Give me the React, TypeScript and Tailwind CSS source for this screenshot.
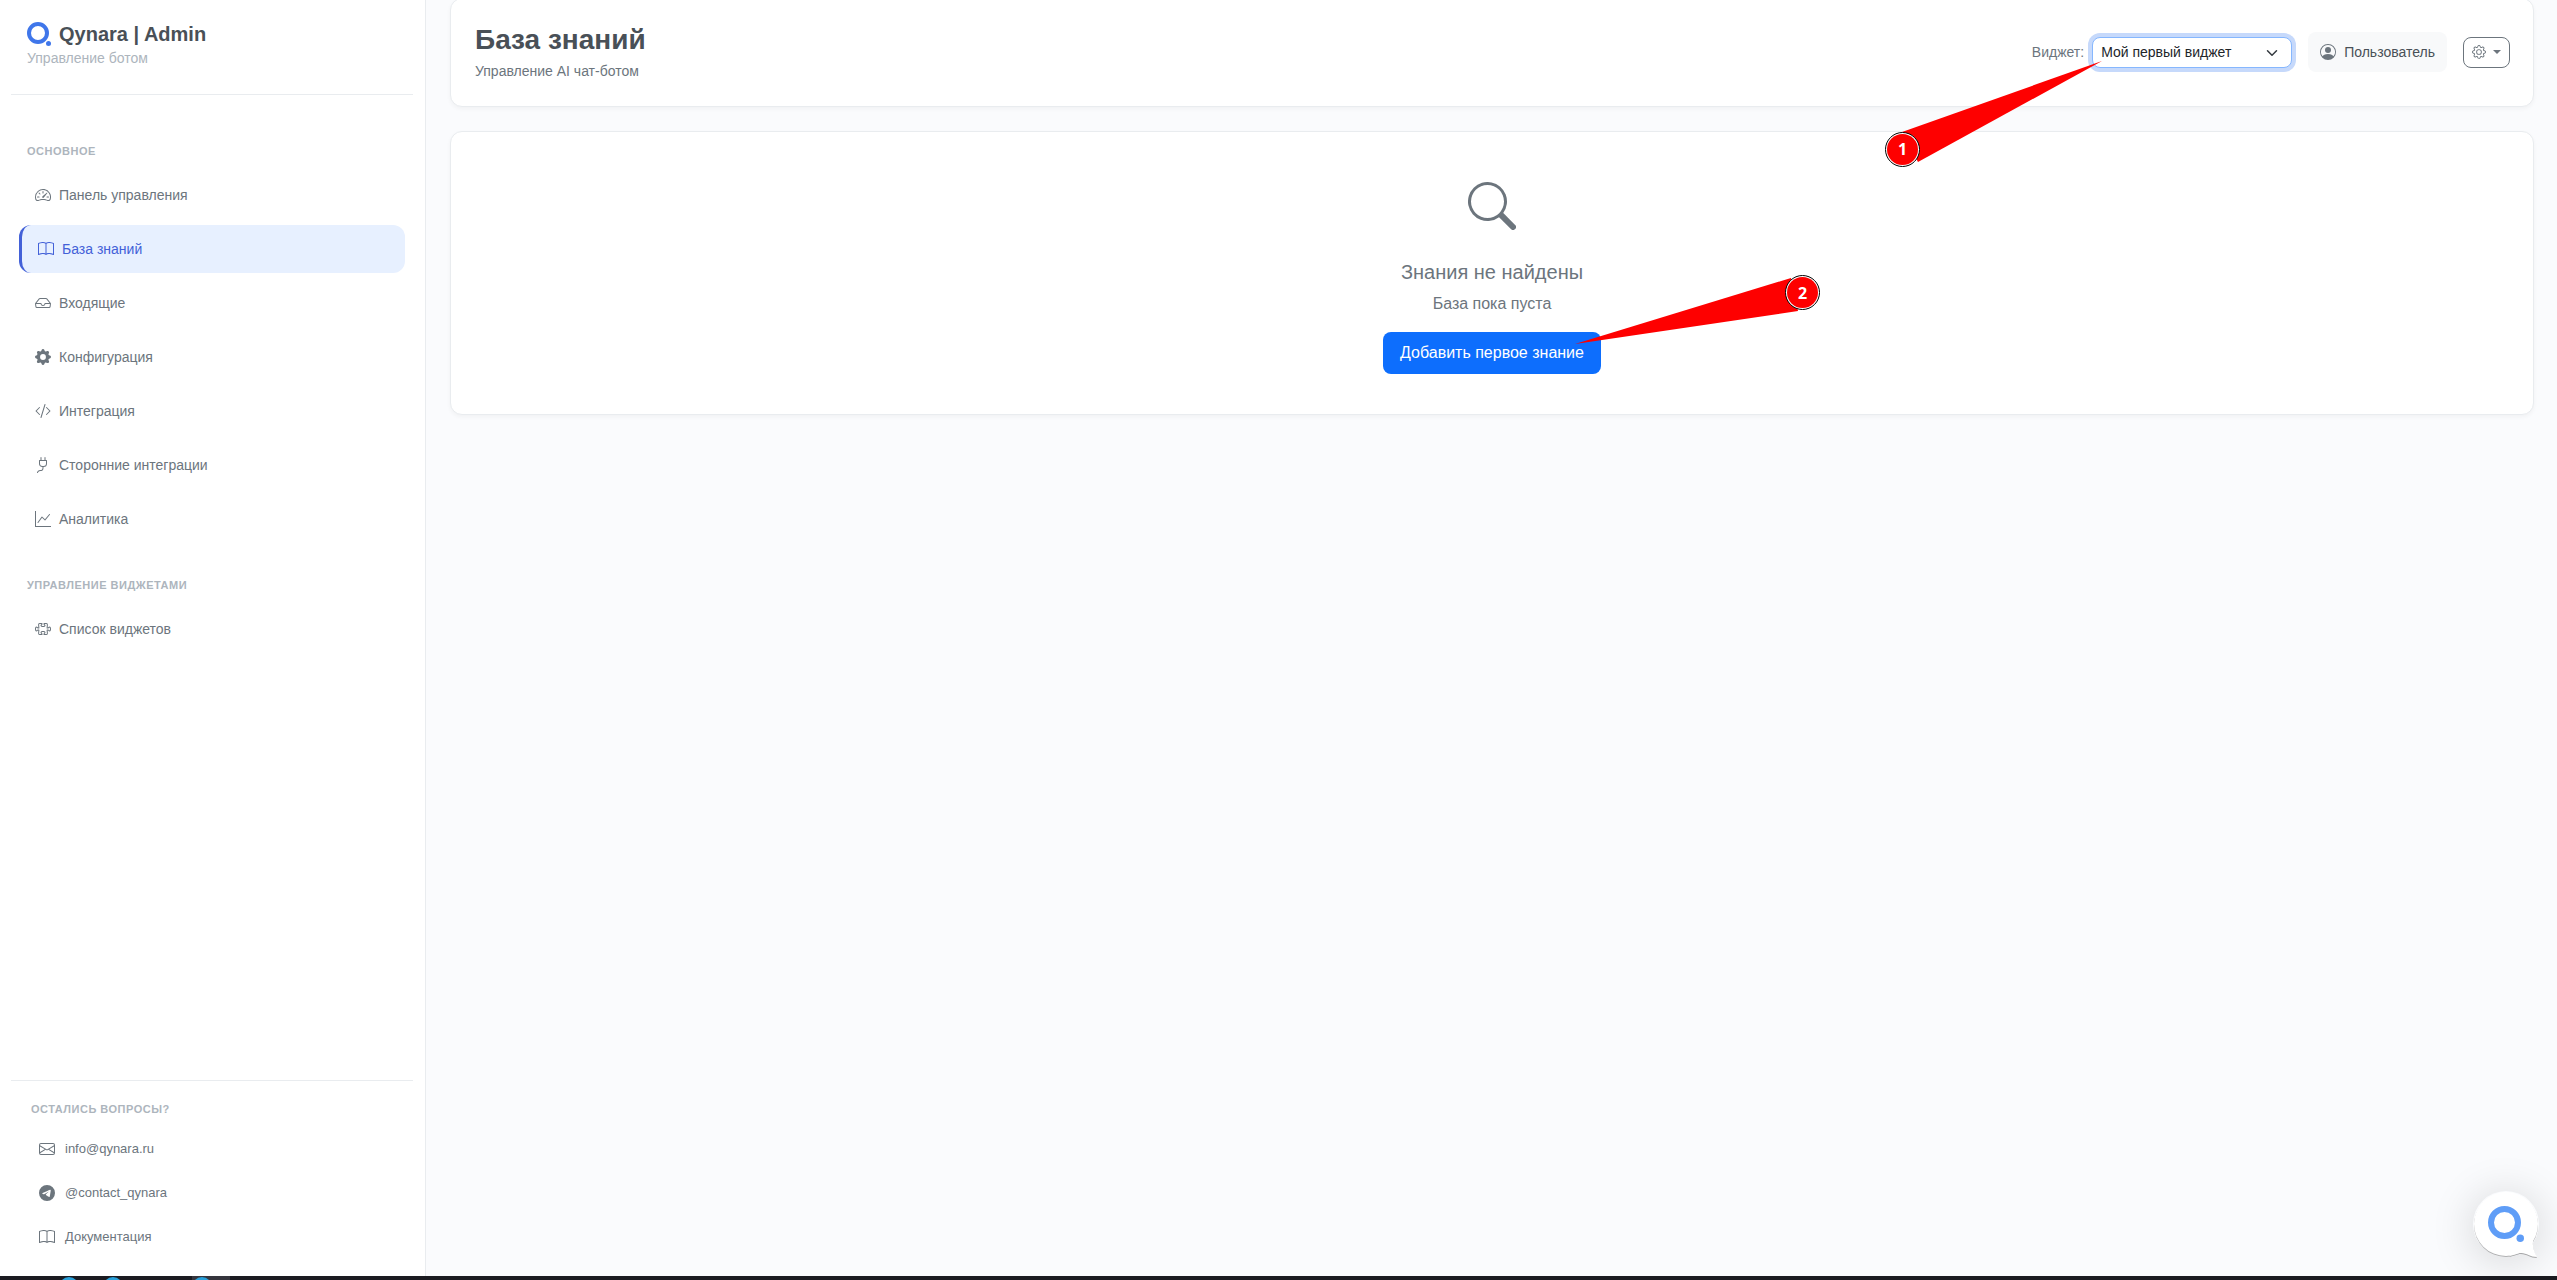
import { useState } from 'react';
import type { IconType } from 'react-icons';
import {
  BsBook,
  BsCodeSlash,
  BsEnvelope,
  BsGear,
  BsGearFill,
  BsGraphUp,
  BsInbox,
  BsPersonCircle,
  BsPlug,
  BsPuzzle,
  BsSearch,
  BsSpeedometer2,
  BsTelegram,
} from 'react-icons/bs';

type NavItem = { label: string; icon: IconType };

const mainNav: NavItem[] = [
  { label: 'Панель управления', icon: BsSpeedometer2 },
  { label: 'База знаний', icon: BsBook },
  { label: 'Входящие', icon: BsInbox },
  { label: 'Конфигурация', icon: BsGearFill },
  { label: 'Интеграция', icon: BsCodeSlash },
  { label: 'Сторонние интеграции', icon: BsPlug },
  { label: 'Аналитика', icon: BsGraphUp },
];

const widgetNav: NavItem[] = [{ label: 'Список виджетов', icon: BsPuzzle }];

const contacts: NavItem[] = [
  { label: 'info@qynara.ru', icon: BsEnvelope },
  { label: '@contact_qynara', icon: BsTelegram },
  { label: 'Документация', icon: BsBook },
];

const Logo = ({ className }: { className?: string }) => (
  <svg viewBox="0 0 24 24" className={className} fill="none" aria-hidden="true">
    <circle cx="11" cy="11" r="9" stroke="currentColor" strokeWidth="4" />
    <circle cx="21.5" cy="21.5" r="2.5" fill="currentColor" />
  </svg>
);

const NavSection = ({
  title,
  items,
  active,
  onSelect,
}: {
  title: string;
  items: NavItem[];
  active: string;
  onSelect: (label: string) => void;
}) => (
  <section>
    <h2 className="px-2 text-[11px] leading-4 font-bold tracking-[0.5px] text-[#adb5bd] uppercase">{title}</h2>
    <ul className="mt-3 space-y-1.5">
      {items.map(({ label, icon: Icon }) => (
        <li key={label}>
          <a
            href="#"
            onClick={() => onSelect(label)}
            className={
              label === active
                ? 'flex h-12 items-center gap-2 rounded-xl border-l-3 border-[#4361d8] bg-[#e7f0ff] px-4 text-sm text-[#4361d8]'
                : 'flex h-12 items-center gap-2 rounded-xl px-4 text-sm text-[#6c757d] hover:bg-gray-50'
            }
          >
            <Icon className="size-4" />
            {label}
          </a>
        </li>
      ))}
    </ul>
  </section>
);

const Sidebar = () => {
  const [active, setActive] = useState('База знаний');

  return (
    <aside className="flex w-[426px] shrink-0 flex-col border-r border-[#e9ecef] bg-white px-3 pl-[11px]">
      <div className="border-b border-[#e9ecef] px-4 pt-5 pb-[26px]">
        <div className="flex items-center gap-2">
          <Logo className="size-6 text-[#3f76ea]" />
          <span className="text-xl leading-7 font-bold text-[#495057]">Qynara | Admin</span>
        </div>
        <p className="text-sm leading-5 text-[#adb5bd]">Управление ботом</p>
      </div>

      <nav className="space-y-[34px] px-2 pt-12">
        <NavSection title="Основное" items={mainNav} active={active} onSelect={setActive} />
        <NavSection title="Управление виджетами" items={widgetNav} active={active} onSelect={setActive} />
      </nav>

      <div className="mt-auto border-t border-[#e9ecef] px-5 pt-5 pb-[17px]">
        <h2 className="text-[11px] leading-4 font-bold tracking-[0.5px] text-[#adb5bd] uppercase">
          Остались вопросы?
        </h2>
        <ul className="mt-2.5">
          {contacts.map(({ label, icon: Icon }) => (
            <li key={label}>
              <a href="#" className="flex h-11 items-center gap-2.5 px-2 text-[13px] text-[#6c757d]">
                <Icon className="size-4" />
                {label}
              </a>
            </li>
          ))}
        </ul>
      </div>
    </aside>
  );
};

const Marker = ({ children, className }: { children: string; className: string }) => (
  <span className={`absolute size-[35px] rounded-full border border-black bg-white p-px ${className}`}>
    <span className="flex size-full items-center justify-center rounded-full bg-[#fe0000] font-['Open_Sans',sans-serif] text-base font-bold text-white">
      {children}
    </span>
  </span>
);

const WidgetSelect = () => (
  <div className="relative">
    <select
      id="widget"
      className="h-[31px] w-[200px] appearance-none rounded-lg border border-[#86b7fe] bg-white px-2 text-sm text-[#212529] ring-4 ring-[#c6d9fb] outline-none"
    >
      <option>Мой первый виджет</option>
    </select>
    <svg viewBox="0 0 16 16" className="pointer-events-none absolute top-2.5 right-3.5 size-3" fill="none" aria-hidden="true">
      <path d="m2 5 6 6 6-6" stroke="#343a40" strokeWidth="2" strokeLinecap="round" strokeLinejoin="round" />
    </svg>
    <div className="pointer-events-none absolute top-6 -left-[207px] z-10 h-[120px] w-[217px]">
      <svg viewBox="0 0 217 120" className="size-full" aria-hidden="true">
        <path d="M217 0 17 71l16 30Z" fill="#fe0000" />
      </svg>
      <Marker className="top-[71px] left-0">1</Marker>
    </div>
  </div>
);

const Header = () => (
  <header className="-mt-0.5 flex items-start justify-between rounded-xl border border-[#e9ecef] bg-white pt-[25px] pr-[23px] pb-[25px] pl-6 shadow-[0_2px_4px_rgba(0,0,0,0.04)]">
    <div>
      <h1 className="text-[28px] leading-8 font-bold text-[#495057]">База знаний</h1>
      <p className="mt-[5px] text-sm leading-5 text-[#6c757d]">Управление AI чат-ботом</p>
    </div>
    <div className="flex items-center gap-4 pt-2">
      <div className="flex items-center gap-2">
        <label htmlFor="widget" className="text-sm text-[#6c757d]">
          Виджет:
        </label>
        <WidgetSelect />
      </div>
      <button className="flex h-10 items-center gap-2 rounded-lg bg-[#f8f9fa] px-3 text-sm text-[#495057]">
        <BsPersonCircle className="size-4 text-[#6c757d]" />
        Пользователь
      </button>
      <button
        aria-label="Настройки"
        className="flex h-[31px] items-center gap-[7px] rounded-lg border border-[#6c757d] px-2 text-[#6c757d]"
      >
        <BsGear className="size-3.5" />
        <span className="border-x-4 border-t-4 border-x-transparent border-t-[#6c757d]" />
      </button>
    </div>
  </header>
);

const EmptyState = () => (
  <section className="flex flex-col items-center rounded-xl border border-[#e9ecef] bg-white px-6 pt-[50px] pb-10 text-[#6c757d] shadow-[0_2px_4px_rgba(0,0,0,0.04)]">
    <BsSearch className="size-12" />
    <h2 className="mt-[30px] text-xl leading-6">Знания не найдены</h2>
    <p className="mt-2 text-base leading-6">База пока пуста</p>
    <div className="relative mt-4">
      <button className="h-[42px] rounded-lg bg-[#0d6efd] px-[17px] text-base text-white">
        Добавить первое знание
      </button>
      <div className="pointer-events-none absolute -top-[57px] left-[192px] h-[70px] w-[245px]">
        <svg viewBox="0 0 245 70" className="size-full" aria-hidden="true">
          <path d="M0 69 216 3l7 33Z" fill="#fe0000" />
        </svg>
        <Marker className="top-0 right-0">2</Marker>
      </div>
    </div>
  </section>
);

const ChatButton = () => (
  <button
    aria-label="Открыть чат"
    className="absolute right-[18px] bottom-[19px] size-[66px] rounded-full shadow-[0_4px_40px_4px_rgba(0,0,0,0.13)]"
  >
    <svg
      viewBox="0 0 66 66"
      className="absolute inset-0 size-full overflow-visible drop-shadow-[0_1px_0_rgba(0,0,0,0.3)]"
      fill="#fff"
      aria-hidden="true"
    >
      <circle cx="33" cy="33" r="32" />
      <path d="M64 40c-6 9-5 17 0 26-7 0-10-4-16-4-5 0-7 2-12 3Z" />
    </svg>
    <Logo className="absolute top-[15px] left-[15px] size-9 text-[#5f9df7]" />
  </button>
);

const Taskbar = () => (
  <footer className="flex h-1 shrink-0 gap-6 overflow-hidden bg-[#1b1b21] pl-[59px]">
    <span className="mt-px size-5 rounded-full bg-[#2aa1da]" />
    <span className="mt-px size-5 rounded-full bg-[#2aa1da]" />
    <span className="ml-[45px] h-5 w-[38px] bg-[#35353d]">
      <span className="mt-px block size-5 rounded-full bg-[#2aa1da]" />
    </span>
  </footer>
);

const App = () => (
  <div className="flex h-screen flex-col overflow-hidden bg-[#fafbfd] font-['Liberation_Sans',Arial,sans-serif]">
    <div className="relative flex min-h-0 flex-1">
      <Sidebar />
      <main className="flex min-w-0 flex-1 flex-col gap-6 pr-[23px] pl-6">
        <Header />
        <EmptyState />
      </main>
      <ChatButton />
    </div>
    <Taskbar />
  </div>
);

export default App;
